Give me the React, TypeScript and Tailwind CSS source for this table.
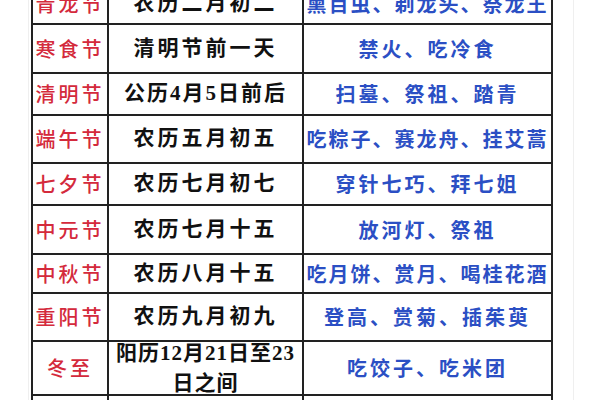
type Row = {
  name: string
  date: string[]
  custom: string
  h: string
  dateCls?: string
  customCls?: string
}

const rows: Row[] = [
  { name: '青龙节', date: ['农历二月初二'], custom: '熏百虫、剃龙头、祭龙王', h: 'h-[41px]', customCls: 'tracking-[2px]' },
  { name: '寒食节', date: ['清明节前一天'], custom: '禁火、吃冷食', h: 'h-[49px]' },
  { name: '清明节', date: ['公历4月5日前后'], custom: '扫墓、祭祖、踏青', h: 'h-[42px]', dateCls: 'tracking-[2px]' },
  { name: '端午节', date: ['农历五月初五'], custom: '吃粽子、赛龙舟、挂艾蒿', h: 'h-[48px]', customCls: 'tracking-[2px]' },
  { name: '七夕节', date: ['农历七月初七'], custom: '穿针七巧、拜七姐', h: 'h-[42px]' },
  { name: '中元节', date: ['农历七月十五'], custom: '放河灯、祭祖', h: 'h-[49px]' },
  { name: '中秋节', date: ['农历八月十五'], custom: '吃月饼、赏月、喝桂花酒', h: 'h-[39px]', customCls: 'tracking-[2px]' },
  { name: '重阳节', date: ['农历九月初九'], custom: '登高、赏菊、插茱萸', h: 'h-[48px]' },
  {
    name: '冬至',
    date: ['阳历12月21日至23', '日之间'],
    custom: '吃饺子、吃米团',
    h: 'h-[54px]',
    dateCls: 'tracking-[1px] leading-[30px]',
  },
  { name: '腊八节', date: ['农历十二月初八'], custom: '喝腊八粥', h: 'h-[48px]' },
]

export default function App() {
  return (
    <div className="h-[400px] w-[600px] overflow-hidden bg-white">
      <div className="ml-[28px] w-[546px] border-x border-[#efefef]">
        <div className="-mt-[16px] ml-[2px] w-[522px] border-x-2 border-[#222]">
          {rows.map((r) => (
            <div key={r.name} className={`flex border-b-2 border-[#222] ${r.h}`}>
              <div className="flex w-[76px] shrink-0 items-center justify-center border-r-2 border-[#222] font-['Noto_Sans_CJK_SC',sans-serif] text-[20px] font-medium tracking-[3px] text-[#d42a3c]">
                {r.name}
              </div>
              <div
                className={`grid w-[195px] shrink-0 place-content-center justify-items-center border-r-2 border-[#222] font-['Liberation_Serif','Noto_Sans_CJK_SC',serif] text-[21px] font-bold text-[#111] ${r.dateCls ?? 'tracking-[3px]'}`}
              >
                {r.date.map((line) => (
                  <span key={line} className="block whitespace-nowrap">
                    {line}
                  </span>
                ))}
              </div>
              <div
                className={`flex flex-1 items-center justify-center whitespace-nowrap font-['Noto_Sans_CJK_SC',sans-serif] text-[20px] font-bold text-[#2b4fc4] ${r.customCls ?? 'tracking-[3px]'}`}
              >
                {r.custom}
              </div>
            </div>
          ))}
        </div>
      </div>
    </div>
  )
}
